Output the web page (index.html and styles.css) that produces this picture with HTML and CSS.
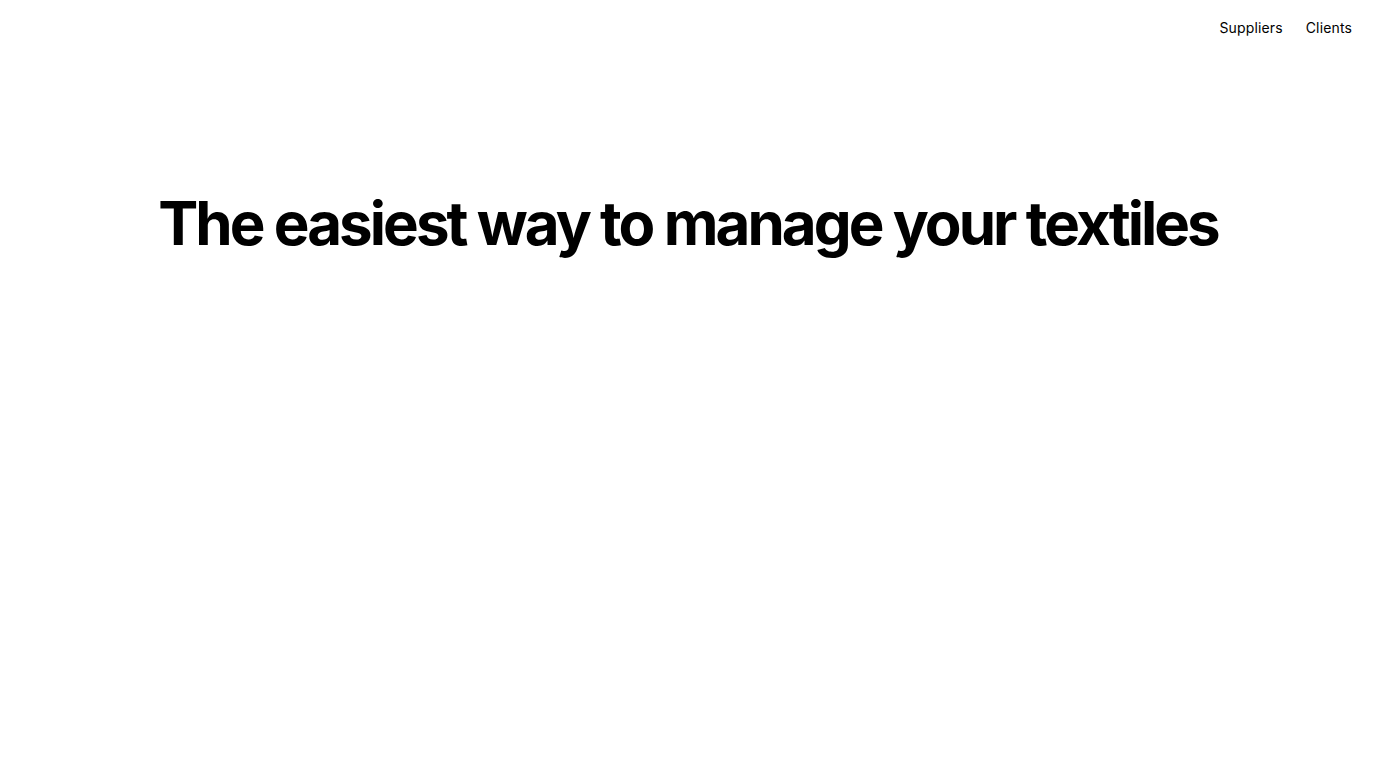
FILE: index.html
```html
<!DOCTYPE html>
<html lang="en">
<head>
<meta charset="utf-8">
<title>Textiles</title>
<link rel="stylesheet" href="styles.css">
</head>
<body>
<header class="header">
  <nav class="nav">
    <a class="nav-link" href="#">Suppliers</a>
    <a class="nav-link" href="#">Clients</a>
  </nav>
</header>
<main class="hero">
  <h1 class="title">The easiest way to manage your textiles</h1>
</main>
</body>
</html>
```
FILE: styles.css
```css
html, body {
  margin: 0;
  padding: 0;
  background: #fff;
  color: #000;
  font-family: Inter, "Noto Sans", sans-serif;
}
.header {
  display: flex;
  justify-content: flex-end;
  padding: 18px 24px 0;
}
.nav {
  display: flex;
  gap: 23px;
}
.nav-link {
  color: #000;
  text-decoration: none;
  font-size: 14px;
  line-height: 20px;
  letter-spacing: 0.01em;
}
.hero {
  display: flex;
  justify-content: center;
  padding-top: 149px;
}
.title {
  margin: 0;
  font-size: 60px;
  font-weight: 700;
  letter-spacing: -0.049em;
  line-height: 72px;
}
```
